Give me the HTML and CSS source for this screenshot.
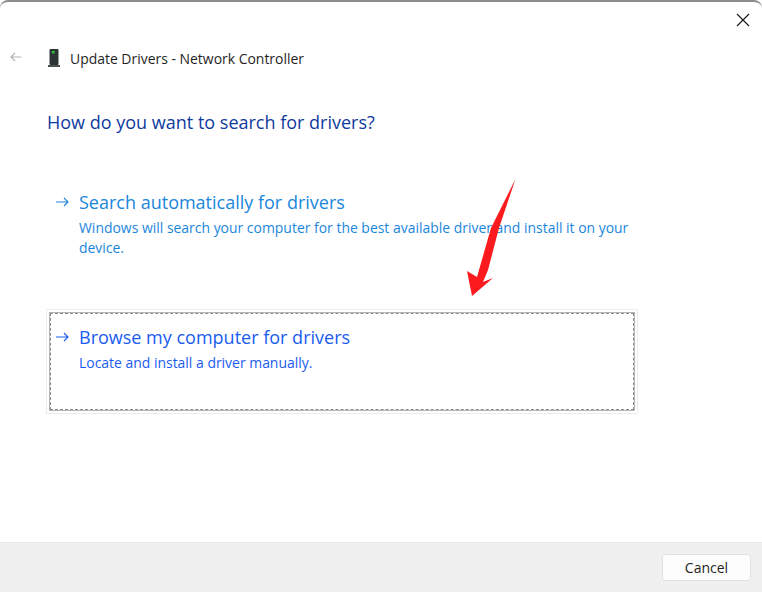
FILE: index.html
```html
<!DOCTYPE html>
<html lang="en">
<head>
<meta charset="utf-8">
<title>Update Drivers</title>
<link rel="stylesheet" href="styles.css">
</head>
<body>
<div class="window">
  <div class="titlebar">
    <svg class="close" width="14" height="14" viewBox="0 0 14 14"><path d="M1 1L13 13M13 1L1 13" stroke="#1a1a1a" stroke-width="1.2" fill="none"/></svg>
  </div>
  <main class="content">
    <div class="header">
      <svg class="back" width="12" height="10" viewBox="0 0 12 10"><path d="M11.5 5H1M5 1L1 5L5 9" stroke="#b4b4b4" stroke-width="1.2" fill="none"/></svg>
      <svg class="device" width="14" height="20" viewBox="0 0 14 20"><rect x="2.5" y="1" width="9" height="16" rx="1" fill="#2e3336"/><rect x="1" y="17" width="12" height="2" fill="#4a4f52"/><rect x="5" y="3" width="2.5" height="2.5" fill="#22d03a"/></svg>
      <span class="title">Update Drivers - Network Controller</span>
    </div>
    <h1 class="question">How do you want to search for drivers?</h1>
    <div class="option option-plain">
      <svg class="arrow arrow-light" width="13" height="10" viewBox="0 0 13 10"><path d="M0 5H12M8 1L12 5L8 9" fill="none" stroke="currentColor" stroke-width="1.1"/></svg>
      <div class="option-text">
        <div class="option-title">Search automatically for drivers</div>
        <div class="option-desc">Windows will search your computer for the best available driver and install it on your device.</div>
      </div>
    </div>
    <div class="focus-ring">
      <div class="option option-focus">
        <svg class="arrow" width="13" height="10" viewBox="0 0 13 10"><path d="M0 5H12M8 1L12 5L8 9" fill="none" stroke="currentColor" stroke-width="1.1"/></svg>
        <div class="option-text">
          <div class="option-title">Browse my computer for drivers</div>
          <div class="option-desc">Locate and install a driver manually.</div>
        </div>
      </div>
    </div>
  </main>
  <footer class="footer">
    <button class="cancel" type="button">Cancel</button>
  </footer>
  <svg class="pointer" width="50" height="120" viewBox="0 0 50 120"><path d="M49.5 1L33 50L22 92L17 104L27 100L6 118L1 93L11 99L25 50Z" fill="#fb1a1d"/></svg>
</div>
</body>
</html>
```
FILE: styles.css
```css
* { box-sizing: border-box; }
html, body { margin: 0; height: 100%; }
body { background: #fff; font-family: "Open Sans", "Noto Sans", sans-serif; overflow: hidden; }
.window { position: relative; width: 762px; height: 592px; display: flex; flex-direction: column; border-top: 2px solid #8c8c8c; border-radius: 8px 8px 0 0; }
.titlebar { height: 46px; display: flex; justify-content: flex-end; align-items: flex-start; padding: 11px 12px 0 0; flex: none; }
.content { flex: 1; padding: 0 0 0 10px; }
.header { display: flex; align-items: center; height: 20px; }
.back { margin-right: 25px; margin-top: -3px; }
.device { margin-right: 9px; }
.title { font-size: 13.95px; color: #1f1f1f; }
.question { margin: 40px 0 0 37px; font-size: 18px; font-weight: 400; line-height: 28px; color: #0f3a9e; }
.option { display: flex; }
.option-plain { margin: 52px 0 0 37px; width: 590px; padding: 0 0 0 9px; height: 121px; color: #1a86dc; }
.focus-ring { margin: 0 0 0 36px; width: 592px; height: 105px; border: 1px solid #ececec; padding: 3px; }
.option-focus { border: 1px dashed #8a8a8a; outline: 1px solid #b5b5b5; height: 97px; padding: 9px 0 0 5px; color: #1a5cf0; }
.arrow { flex: none; margin: 9px 10px 0 0; color: #1a5cf0; }
.arrow-light { color: #1a86dc; }
.option-title { font-size: 18px; line-height: 28px; white-space: nowrap; }
.option-desc { font-size: 13.95px; line-height: 20px; margin-top: 2px; }
.footer { height: 50px; flex: none; background: #f0f0f0; border-top: 1px solid #e6e6e6; display: flex; justify-content: flex-end; align-items: center; padding: 0 11px 0 0; }
.cancel { width: 89px; height: 27px; background: #fdfdfd; border: 1px solid #e2e2e2; border-radius: 3px; font: 14px "Open Sans", "Noto Sans", sans-serif; color: #1f1f1f; padding: 0; }
.pointer { position: absolute; left: 466px; top: 176px; }
```
